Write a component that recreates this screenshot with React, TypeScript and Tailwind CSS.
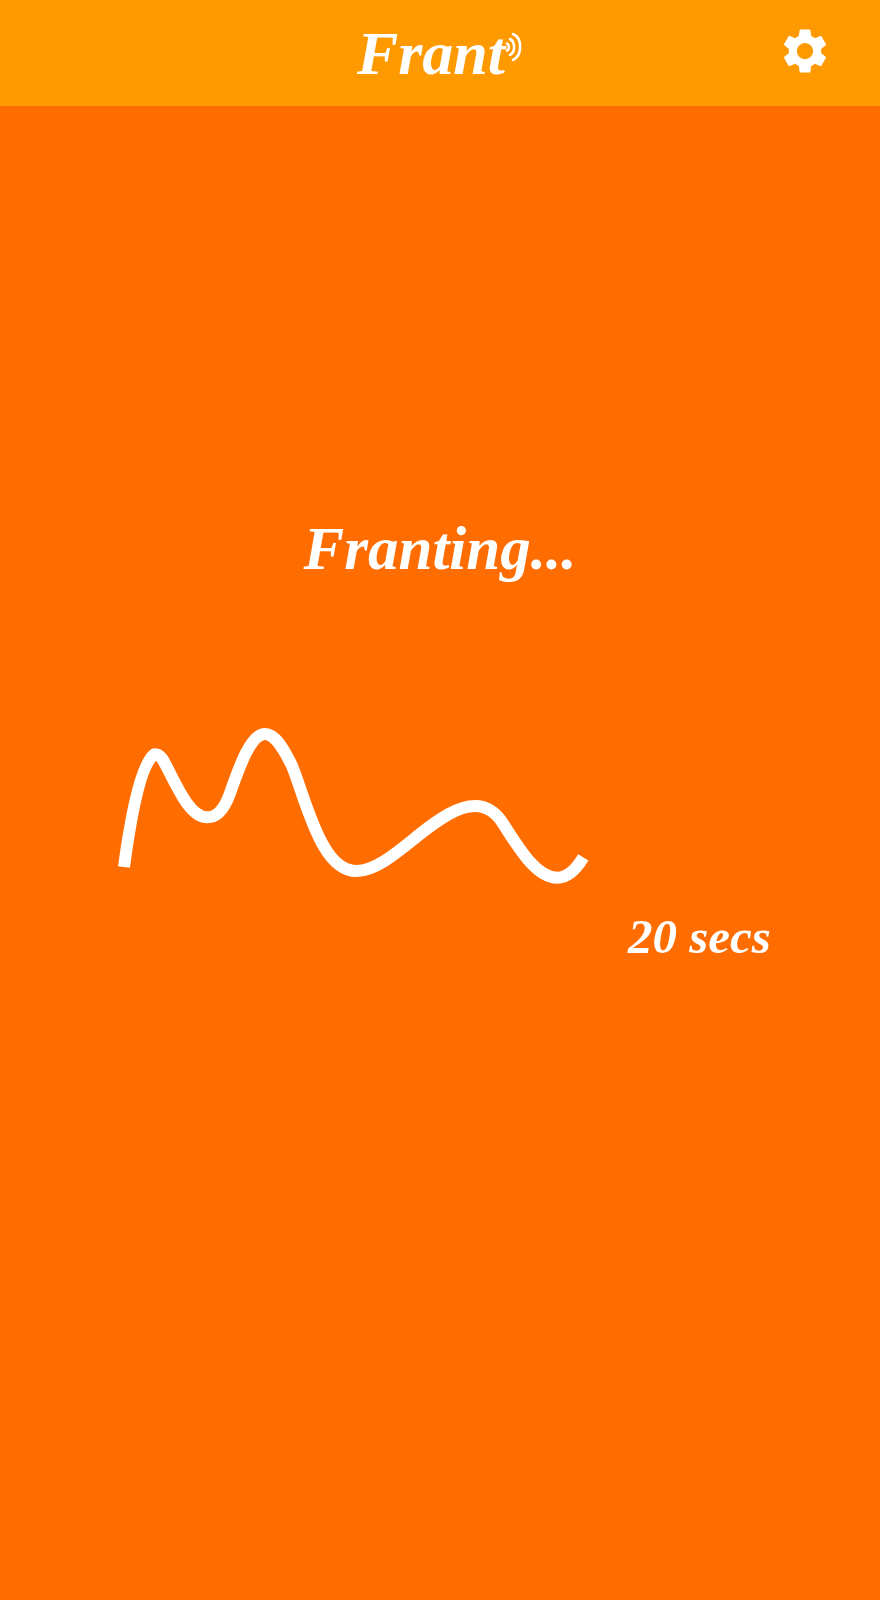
const scriptFont = "font-['Liberation_Serif',cursive] italic font-bold text-white";

function Gear() {
  return (
    <svg viewBox="0 0 24 24" className="w-[54px] h-[54px] fill-white">
      <path d="M19.14 12.94c.04-.3.06-.61.06-.94 0-.32-.02-.64-.07-.94l2.03-1.58c.18-.14.23-.41.12-.61l-1.92-3.32c-.12-.22-.37-.29-.59-.22l-2.39.96c-.5-.38-1.03-.7-1.62-.94l-.36-2.54c-.04-.24-.24-.41-.48-.41h-3.84c-.24 0-.43.17-.47.41l-.36 2.54c-.59.24-1.13.57-1.62.94l-2.39-.96c-.22-.08-.47 0-.59.22L2.74 8.87c-.12.21-.08.47.12.61l2.03 1.58c-.05.3-.09.63-.09.94s.02.64.07.94l-2.03 1.58c-.18.14-.23.41-.12.61l1.92 3.32c.12.22.37.29.59.22l2.39-.96c.5.38 1.03.7 1.62.94l.36 2.54c.05.24.24.41.48.41h3.84c.24 0 .44-.17.47-.41l.36-2.54c.59-.24 1.13-.56 1.62-.94l2.39.96c.22.08.47 0 .59-.22l1.92-3.32c.12-.22.07-.47-.12-.61l-2.01-1.58zM12 15.6c-1.98 0-3.6-1.62-3.6-3.6s1.62-3.6 3.6-3.6 3.6 1.62 3.6 3.6-1.62 3.6-3.6 3.6z" />
    </svg>
  );
}

function Signal() {
  return (
    <svg viewBox="0 0 18 30" className="w-[18px] h-[30px] mb-[12px] fill-none stroke-white" strokeWidth="2.6" strokeLinecap="round">
      <path d="M2 11.500c2.500 1 2.500 6 0 7" />
      <path d="M5 7c5.500 3 5.500 13 0 16" />
      <path d="M8 2c9.500 4 9.500 21 0 26" />
    </svg>
  );
}

function Wave() {
  return (
    <svg viewBox="0 0 1500 570" className="w-[500px] h-[190px] fill-none stroke-white" strokeWidth="36">
      <path d="M72 471C95 300 125 160 163 133C180 130 190 150 205 180C240 250 275 322 322 322C355 322 375 290 388 255C415 180 450 72 495 72C525 72 550 115 575 165C600 225 630 340 672 410C700 458 735 483 768 483C830 483 900 420 960 372C1020 325 1075 288 1125 288C1165 288 1190 310 1210 342C1260 420 1310 503 1372 503C1405 503 1430 475 1450 442" />
    </svg>
  );
}

export default function App() {
  return (
    <div className="min-h-[1600px] bg-[#ff6d00] flex flex-col">
      <header className="h-[106px] bg-[#ff9900] grid grid-cols-[1fr_auto_1fr] items-center">
        <div />
        <div className="flex items-center">
          <span className={`${scriptFont} text-[62px] leading-none`}>Frant</span>
          <Signal />
        </div>
        <div className="flex justify-end pr-[48px] pb-[4px]">
          <Gear />
        </div>
      </header>
      <h1 className={`${scriptFont} mt-[398px] text-center text-[61px] leading-[90px]`}>Franting...</h1>
      <div className="mt-[116px] pl-[100px]">
        <Wave />
      </div>
      <p className={`${scriptFont} mt-[12px] pl-[628px] text-[49px] leading-[50px]`}>20 secs</p>
    </div>
  );
}
